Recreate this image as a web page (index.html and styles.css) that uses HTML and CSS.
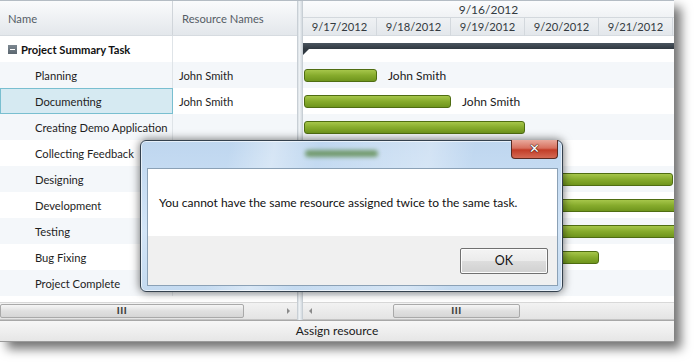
FILE: index.html
```html
<!DOCTYPE html>
<html lang="en">
<head>
  <meta charset="UTF-8">
  <title>Gantt - Assign resource</title>
  <link rel="stylesheet" href="styles.css">
</head>
<body>

<div class="app">
  <div class="panes">

    <!-- Grille des tâches -->
    <div class="grid">
      <div class="grid-head">
        <div class="col-name">Name</div>
        <div class="col-res">Resource Names</div>
      </div>
      <div class="grid-body">
        <div class="row"><div class="name summary"><span class="toggle"></span>Project Summary Task</div><div class="res"></div></div>
        <div class="row alt"><div class="name">Planning</div><div class="res">John Smith</div></div>
        <div class="row"><div class="name selected">Documenting</div><div class="res">John Smith</div></div>
        <div class="row alt"><div class="name">Creating Demo Application</div><div class="res"></div></div>
        <div class="row"><div class="name">Collecting Feedback</div><div class="res"></div></div>
        <div class="row alt"><div class="name">Designing</div><div class="res"></div></div>
        <div class="row"><div class="name">Development</div><div class="res"></div></div>
        <div class="row alt"><div class="name">Testing</div><div class="res"></div></div>
        <div class="row"><div class="name">Bug Fixing</div><div class="res"></div></div>
        <div class="row alt"><div class="name">Project Complete</div><div class="res"></div></div>
      </div>
      <div class="hscroll">
        <div class="thumb left-thumb"><span class="grip">III</span></div>
        <span class="arrow-right"></span>
      </div>
    </div>

    <div class="splitter"></div>

    <!-- Diagramme de Gantt -->
    <div class="gantt">
      <div class="gantt-head">
        <div class="week">9/16/2012</div>
        <div class="days">
          <div class="day">9/17/2012</div>
          <div class="day">9/18/2012</div>
          <div class="day">9/19/2012</div>
          <div class="day">9/20/2012</div>
          <div class="day">9/21/2012</div>
        </div>
      </div>
      <div class="gantt-body">
        <div class="g-row"><div class="summary-bar"></div></div>
        <div class="g-row alt"><div class="bar" style="margin-left: 1px; width: 73px;"></div><span class="label">John Smith</span></div>
        <div class="g-row"><div class="bar" style="margin-left: 1px; width: 147px;"></div><span class="label">John Smith</span></div>
        <div class="g-row alt"><div class="bar" style="margin-left: 1px; width: 221px;"></div></div>
        <div class="g-row"></div>
        <div class="g-row alt"><div class="bar" style="margin-left: 240px; width: 130px;"></div></div>
        <div class="g-row"><div class="bar open" style="margin-left: 240px; width: 140px;"></div></div>
        <div class="g-row alt"><div class="bar open" style="margin-left: 240px; width: 140px;"></div></div>
        <div class="g-row"><div class="bar" style="margin-left: 200px; width: 96px;"></div></div>
        <div class="g-row alt"></div>
      </div>
      <div class="hscroll">
        <span class="arrow-left"></span>
        <div class="thumb right-thumb"><span class="grip">III</span></div>
      </div>
    </div>

  </div>
  <div class="statusbar">Assign resource</div>
</div>

<!-- Boîte de message -->
<div class="dialog">
  <div class="title-blur"></div>
  <div class="btn-x">✕</div>
  <div class="dialog-inner">
    <div class="message">You cannot have the same resource assigned twice to the same task.</div>
    <div class="dialog-buttons">
      <div class="btn-ok">OK</div>
    </div>
  </div>
</div>

</body>
</html>
```

FILE: styles.css
```css
* {
  margin: 0;
  padding: 0;
  box-sizing: border-box;
}

body {
  width: 694px;
  height: 362px;
  background: #ffffff;
  font-family: 'Lato', 'Open Sans', sans-serif;
  font-size: 12px;
  color: #1e1e1e;
  position: relative;
  overflow: hidden;
}

.app {
  width: 674px;
  height: 342px;
  display: flex;
  flex-direction: column;
  background: #ffffff;
  border-top: 1px solid #b4bcc4;
  box-shadow: 7px 7px 10px rgba(0, 0, 0, 0.55);
}

.panes {
  flex: 1;
  display: flex;
}

/* Grille */
.grid {
  width: 297px;
  display: flex;
  flex-direction: column;
  font-size: 11.2px;
}

.grid-head {
  height: 35px;
  display: flex;
  background: linear-gradient(#fafbfc, #e3e7eb);
  border-bottom: 1px solid #d6dbe0;
  color: #555d66;
}

.grid-head > div {
  display: flex;
  align-items: center;
}

.col-name {
  width: 173px;
  padding-left: 8px;
  border-right: 1px solid #d0d5da;
}

.col-res {
  flex: 1;
  padding-left: 9px;
}

.grid-body {
  height: 266px;
}

.row {
  height: 26px;
  display: flex;
  white-space: nowrap;
}

.row.alt {
  background: #f4f7fa;
}

.row .name {
  width: 173px;
  padding-left: 35px;
  display: flex;
  align-items: center;
  border-right: 1px solid #dfe4e8;
}

.row .name.summary {
  padding-left: 8px;
  font-weight: bold;
  color: #111;
}

.row .name.selected {
  background: #d6eaf2;
  border: 1px solid #79bfd0;
  padding-left: 34px;
}

.row .res {
  flex: 1;
  padding-left: 6px;
  display: flex;
  align-items: center;
}

.toggle {
  width: 9px;
  height: 9px;
  margin-right: 4px;
  background: linear-gradient(#7d8891, #5c6770);
  position: relative;
}

.toggle::after {
  content: "";
  position: absolute;
  left: 2px;
  top: 4px;
  width: 5px;
  height: 1px;
  background: #fff;
}

/* Barres de défilement */
.hscroll {
  height: 18px;
  border-top: 1px solid #d8d8d8;
  border-bottom: 1px solid #c4c4c4;
  background: linear-gradient(#f2f2f2, #e4e4e4);
  display: flex;
  align-items: center;
  position: relative;
}

.thumb {
  height: 14px;
  border: 1px solid #a9a9a9;
  border-radius: 2px;
  background: linear-gradient(#f6f6f6, #e0e0e0 50%, #d6d6d6);
  display: flex;
  justify-content: center;
  align-items: center;
}

.grip {
  font-family: 'DejaVu Sans', sans-serif;
  font-size: 8px;
  font-weight: bold;
  color: #444;
  letter-spacing: 0.5px;
}

.left-thumb {
  width: 244px;
}

.right-thumb {
  width: 127px;
  margin-left: 81px;
}

.arrow-right {
  margin-left: 43px;
  width: 0;
  height: 0;
  border-top: 3px solid transparent;
  border-bottom: 3px solid transparent;
  border-left: 3px solid #8a8a8a;
}

.arrow-left {
  margin-left: 6px;
  width: 0;
  height: 0;
  border-top: 3px solid transparent;
  border-bottom: 3px solid transparent;
  border-right: 3px solid #8a8a8a;
}

.splitter {
  width: 6px;
  background: linear-gradient(to right, #d9dfe4, #eef2f5 40%, #d3d9df);
  border-left: 1px solid #c8cfd5;
  border-right: 1px solid #c8cfd5;
}

/* Gantt */
.gantt {
  flex: 1;
  display: flex;
  flex-direction: column;
  overflow: hidden;
}

.gantt-head {
  height: 35px;
  background: linear-gradient(#fbfcfd, #e3e7eb);
  border-bottom: 1px solid #d6dbe0;
  color: #333a40;
  font-size: 11.2px;
}

.week {
  height: 17px;
  text-align: center;
  line-height: 18px;
  border-bottom: 1px solid #d3d8dd;
  font-size: 12px;
}

.days {
  display: flex;
  height: 18px;
}

.day {
  width: 74px;
  flex-shrink: 0;
  text-align: center;
  line-height: 18px;
  border-right: 1px solid #d3d8dd;
}

.gantt-body {
  height: 266px;
}

.g-row {
  height: 26px;
  display: flex;
  align-items: flex-start;
  padding-top: 7px;
  white-space: nowrap;
}

.g-row.alt {
  background: #f4f7fa;
}

.summary-bar {
  width: 100%;
  height: 6px;
  background: linear-gradient(#4a555f, #2f3840);
  position: relative;
}

.summary-bar::after {
  content: "";
  position: absolute;
  left: 0;
  top: 6px;
  border-top: 6px solid #2f3840;
  border-right: 6px solid transparent;
}

.bar {
  height: 13px;
  flex-shrink: 0;
  border: 1px solid #4f6d12;
  border-radius: 3px;
  background: linear-gradient(#a6c64a, #86ab2c 50%, #6f951d);
}

.bar.open {
  border-top-right-radius: 0;
  border-bottom-right-radius: 0;
}

.label {
  margin-left: 11px;
  font-size: 12px;
  line-height: 13px;
  color: #1a1a1a;
}

.statusbar {
  height: 22px;
  border-top: 1px solid #a8a8a8;
  border-bottom: 1px solid #9a9a9a;
  background: linear-gradient(#f7f7f7, #e6e6e6);
  text-align: center;
  line-height: 20px;
  font-size: 12px;
  color: #1a1a1a;
}

/* Fenêtre de message */
.dialog {
  position: absolute;
  left: 140px;
  top: 140px;
  width: 423px;
  height: 152px;
  border: 1px solid #34414e;
  border-radius: 6px;
  padding: 27px 4px 5px 6px;
  background:
    linear-gradient(100deg, rgba(255, 255, 255, 0) 20%, rgba(255, 255, 255, 0.35) 30%, rgba(255, 255, 255, 0) 40%, rgba(255, 255, 255, 0.3) 65%, rgba(255, 255, 255, 0) 75%),
    linear-gradient(#bed6ef, #d3e5f7 60%, #c4daf0);
  box-shadow: 0 0 10px rgba(0, 0, 0, 0.6), inset 0 0 0 1px rgba(255, 255, 255, 0.6);
}

.title-blur {
  position: absolute;
  left: 164px;
  top: 9px;
  width: 73px;
  height: 7px;
  border-radius: 4px;
  background: #5d8a4c;
  filter: blur(2px);
  opacity: 0.8;
}

.btn-x {
  position: absolute;
  right: 4px;
  top: -1px;
  width: 47px;
  height: 19px;
  border: 1px solid #5a2a22;
  border-top: none;
  border-radius: 0 0 4px 4px;
  background: linear-gradient(#e9a99c, #d7705e 45%, #c23d28 55%, #d46a55);
  color: #ffffff;
  font-family: 'DejaVu Sans', sans-serif;
  font-size: 13px;
  font-weight: bold;
  text-align: center;
  line-height: 17px;
  text-shadow: 0 0 1px #3a1a14, 0 0 1px #3a1a14, 0 0 1px #3a1a14;
}

.dialog-inner {
  height: 100%;
  border: 1px solid #8ba1b6;
  display: flex;
  flex-direction: column;
}

.message {
  height: 67px;
  background: #ffffff;
  padding-left: 11px;
  display: flex;
  align-items: center;
  font-size: 12px;
  color: #111;
}

.dialog-buttons {
  flex: 1;
  background: #f0f0f0;
  display: flex;
  justify-content: flex-end;
  padding: 12px 9px 0 0;
}

.btn-ok {
  width: 88px;
  height: 26px;
  border: 1px solid #707070;
  border-radius: 2px;
  background: linear-gradient(#f4f4f4, #ebebeb 50%, #dddddd 51%, #d0d0d0);
  box-shadow: inset 0 0 0 1px #fcfcfc;
  text-align: center;
  line-height: 24px;
  font-size: 12.5px;
  color: #111;
}
```
